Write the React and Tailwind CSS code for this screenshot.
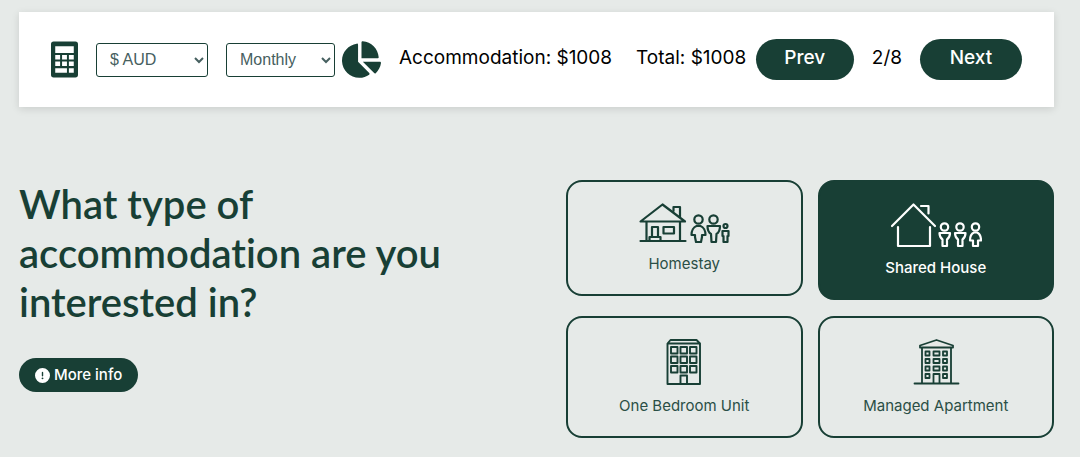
import { useState } from "react";
import { FaChartPie } from "react-icons/fa";
import { FaCircleExclamation } from "react-icons/fa6";

const CalculatorIcon = () => (
  <svg className="h-[37px] w-[27px] shrink-0" viewBox="0 0 83 110" fill="currentColor">
    <path
      fillRule="evenodd"
      d="M8 0h67q8 0 8 8v94q0 8-8 8H8q-8 0-8-8V8q0-8 8-8zM13 14v21h57V14zM13 41v14h15V41zM34 41v14h15V41zM55 41v14h15V41zM13 61v14h15V61zM34 61v14h15V61zM55 61v14h15V61zM13 82v14h36V82zM55 82v14h15V82z"
    />
  </svg>
);

const HomestayIcon = () => (
  <svg width="92" height="42" viewBox="0 0 92 42" fill="none" stroke="currentColor" strokeWidth="2.200" strokeLinejoin="round" strokeLinecap="round">
    <path d="M2.500 19.500 24.500 2.500 47 19.500Z" />
    <path d="M35.500 9V5h6.500v10" />
    <path d="M8.500 20v18.500M42 20v18.500M2.500 39h45" />
    <path d="M14 34.500V25h6v9.500M11.500 38.500v-3.500h11v3.500M25.500 25h10.500v6.500H25.500z" />
    <circle cx="60.500" cy="17.500" r="4.200" />
    <path d="M58.500 24c-3 1-5 5-5 9H57v2l1 5h5l1-5v-2h3.500c0-4-2-8-5-9z" />
    <circle cx="75.500" cy="17.500" r="4.200" />
    <path d="M69.500 24H82c0 4-1 6.500-3.500 8L78 40h-4.500l-.5-8c-2.500-1.500-3.500-4-3.500-8z" />
    <circle cx="87.500" cy="24" r="2" />
    <path d="M84.500 29h6v5h-1v6h-4v-6h-1z" />
  </svg>
);

const SharedHouseIcon = () => (
  <svg width="92" height="46" viewBox="0 0 92 46" fill="none" stroke="currentColor" strokeWidth="2.200" strokeLinejoin="round" strokeLinecap="round">
    <path d="M2 24 23.500 2.500 45 24M31 4h7.500v7.500" />
    <path d="M8 25v19h32V25" />
    <circle cx="54.500" cy="25" r="3.700" />
    <path d="M49.500 31h10.500c0 3-1 5-3 6.500V44h-4.500v-6.500c-2-1.500-3-3.500-3-6.500z" />
    <circle cx="70" cy="25" r="3.700" />
    <path d="M65 31h10.500c0 3-1 5-3 6.500V44H68v-6.500c-2-1.500-3-3.500-3-6.500z" />
    <circle cx="85.500" cy="25" r="3.700" />
    <path d="M84 30.500c-2.500 1-4 4-4 8h3V44h5v-5.500h3c0-4-1.500-7-4-8z" />
  </svg>
);

const UNIT_COLS = [5, 14.5, 24];
const UNIT_ROWS = [9, 18.5, 28];

const UnitIcon = () => (
  <svg width="36" height="48" viewBox="0 0 36 48" fill="none" stroke="currentColor" strokeWidth="1.900" strokeLinejoin="round">
    <path d="M1.500 5.500 4.500 2h26l3.500 3.500V46H1.500zM1.500 5.500H34" />
    {UNIT_ROWS.map((y) =>
      UNIT_COLS.map((x) => <rect key={`${x}-${y}`} x={x} y={y} width="6.500" height="6.500" />)
    )}
    <path d="M14.500 46v-8.500H21V46" />
  </svg>
);

const APARTMENT_ROWS = [13.5, 21, 28.5, 36];

const ApartmentIcon = () => (
  <svg width="48" height="48" viewBox="0 0 48 48" fill="none" stroke="currentColor" strokeWidth="1.800" strokeLinejoin="round" strokeLinecap="round">
    <path d="M8 9.500V7.500L24.500 2 41 7.500v2z" />
    <path d="M10 10v35M39 10v35M2.500 45.500h44" />
    {APARTMENT_ROWS.map((y, row) => (
      <g key={y}>
        <rect x="13.500" y={y} width="4" height="4" />
        {row < 3 && <rect x="21.500" y={y} width="6" height="4" />}
        <rect x="31" y={y} width="4" height="4" />
      </g>
    ))}
    <path d="M21.500 45v-9h6v9" />
  </svg>
);

const options = [
  { id: "homestay", label: "Homestay", Icon: HomestayIcon },
  { id: "shared", label: "Shared House", Icon: SharedHouseIcon },
  { id: "unit", label: "One Bedroom Unit", Icon: UnitIcon },
  { id: "apartment", label: "Managed Apartment", Icon: ApartmentIcon },
];

const selectClass =
  "h-[34px] shrink-0 rounded-[3px] border border-[#183f35] bg-white pl-[9px] font-['Liberation_Sans',Arial,sans-serif] text-base text-[#466060]";

const navButtonClass = "h-[41px] rounded-full bg-[#183f35] pb-[3px] text-[19px] font-medium text-white";

export default function App() {
  const [selected, setSelected] = useState("shared");

  return (
    <div className="min-h-screen bg-[#e6eae8] pt-3 pr-[26px] pb-5 pl-[19px] font-[Inter,sans-serif] text-[#183f35]">
      <header className="flex items-center bg-white px-8 py-[27px] shadow-[0_2px_8px_rgba(0,0,0,0.12)]">
        <CalculatorIcon />
        <select aria-label="Currency" defaultValue="aud" className={`${selectClass} ml-[18px] w-28`}>
          <option value="aud">$ AUD</option>
          <option value="usd">$ USD</option>
        </select>
        <select aria-label="Period" defaultValue="monthly" className={`${selectClass} ml-[18px] w-[109px]`}>
          <option value="weekly">Weekly</option>
          <option value="monthly">Monthly</option>
        </select>
        <FaChartPie className="ml-[7px] h-[37px] w-[39px] shrink-0" />
        <div className="ml-[18px] flex gap-6 pb-[3px] text-[19px] whitespace-nowrap text-black">
          <span>Accommodation: $1008</span>
          <span>Total: $1008</span>
        </div>
        <div className="ml-auto flex items-center gap-[18px]">
          <button type="button" className={`${navButtonClass} w-[98px]`}>Prev</button>
          <span className="pb-[3px] text-[19px] text-black">2/8</span>
          <button type="button" className={`${navButtonClass} w-[102px]`}>Next</button>
        </div>
      </header>

      <main className="mt-[73px] grid grid-cols-2 items-start gap-[59px]">
        <section>
          <h1 className="font-[Lato,sans-serif] text-[40px] leading-[49px] font-semibold [font-variant-ligatures:none]">
            What type of accommodation are you interested in?
          </h1>
          <button
            type="button"
            className="mt-[31px] flex h-[34px] items-center gap-1 rounded-full bg-[#183f35] px-4 text-[15px] font-medium text-white"
          >
            <FaCircleExclamation className="size-[15px]" />
            More info
          </button>
        </section>

        <section className="grid grid-cols-2 items-start gap-x-[15px] gap-y-4">
          {options.map(({ id, label, Icon }) => (
            <button
              key={id}
              type="button"
              aria-pressed={selected === id}
              onClick={() => setSelected(id)}
              className={`flex flex-col items-center gap-2 rounded-2xl border-2 border-[#183f35] pt-5 pb-[18px] ${
                selected === id ? "bg-[#183f35] font-medium text-white" : "text-[#183f35]"
              }`}
            >
              <Icon />
              <span className={`text-[15px] leading-6 ${selected === id ? "" : "text-[#2b4f46]"}`}>{label}</span>
            </button>
          ))}
        </section>
      </main>
    </div>
  );
}
